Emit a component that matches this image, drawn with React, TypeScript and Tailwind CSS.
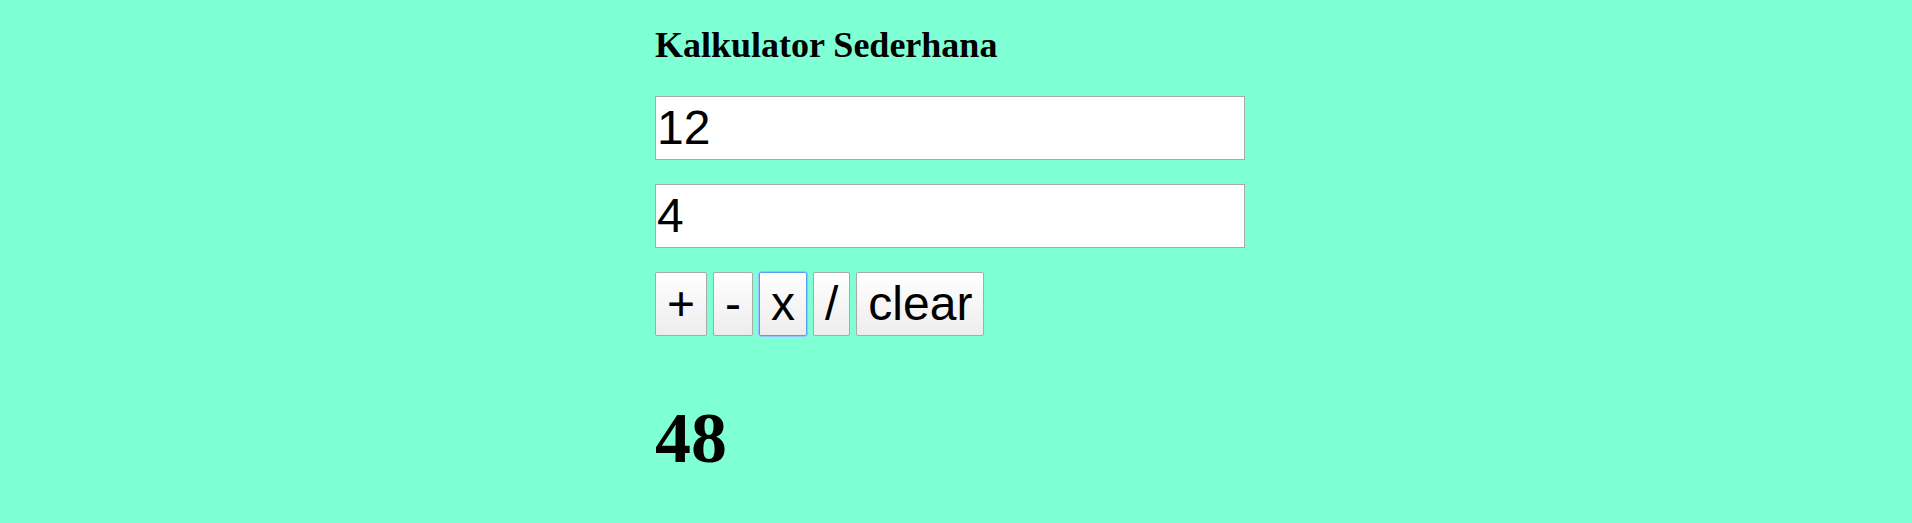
import React, { useState } from "react";

export default function App() {
  const [a, setA] = useState("12");
  const [b, setB] = useState("4");
  const [result, setResult] = useState("48");

  const calc = (op: string) => {
    const x = parseFloat(a);
    const y = parseFloat(b);
    let r = 0;
    if (op === "+") r = x + y;
    if (op === "-") r = x - y;
    if (op === "x") r = x * y;
    if (op === "/") r = x / y;
    setResult(String(r));
  };

  const btn =
    "h-[64px] px-[11px] border border-[#a9a9a9] rounded-[2px] bg-gradient-to-b from-[#ffffff] to-[#ededed] text-[48px] leading-none text-black flex items-center justify-center";

  return (
    <div className="min-h-[523px] w-full bg-[#7fffd4]">
      <div className="w-[602px] mx-auto pt-[25px] flex flex-col" style={{ fontFamily: '"Liberation Serif", "Times New Roman", serif' }}>
        <h2 className="text-[36px] leading-[40px] font-bold text-black">Kalkulator Sederhana</h2>
        <div className="mt-[31px] flex flex-col gap-[24px]" style={{ fontFamily: '"Liberation Sans", Arial, sans-serif' }}>
          <input
            value={a}
            onChange={(e) => setA(e.target.value)}
            className="w-[590px] h-[64px] border border-[#a9a9a9] bg-white pl-[1px] text-[48px] text-black outline-none"
          />
          <input
            value={b}
            onChange={(e) => setB(e.target.value)}
            className="w-[590px] h-[64px] border border-[#a9a9a9] bg-white pl-[1px] text-[48px] text-black outline-none"
          />
          <div className="flex gap-[6px]">
            <button className={btn} onClick={() => calc("+")}>+</button>
            <button className={btn} onClick={() => calc("-")}>-</button>
            <button
              className="h-[64px] px-[11px] border border-[#5b9af7] outline outline-1 outline-[#9cc1fb] rounded-[2px] bg-gradient-to-b from-[#ffffff] to-[#ededed] text-[48px] leading-none text-black flex items-center justify-center"
              onClick={() => calc("x")}
            >
              x
            </button>
            <button className={btn} onClick={() => calc("/")}>/</button>
            <button
              className={btn}
              onClick={() => {
                setA("");
                setB("");
                setResult("");
              }}
            >
              clear
            </button>
          </div>
        </div>
        <div className="mt-[62px] text-[72px] leading-[80px] font-bold text-black h-[80px]">{result}</div>
      </div>
    </div>
  );
}
